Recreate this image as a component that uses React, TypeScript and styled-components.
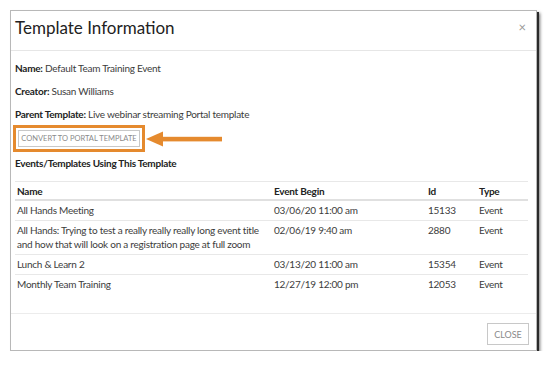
import React from "react";
import styled, { createGlobalStyle } from "styled-components";

const GlobalStyle = createGlobalStyle`
  html, body { margin: 0; padding: 0; background: #fff; }
  body { font-family: Lato, "Open Sans", sans-serif; color: #333; }
  * { box-sizing: border-box; }
`;

const Page = styled.div`
  padding: 10px 0 0 10px;
`;

const Modal = styled.div`
  width: 527px;
  height: 341px;
  background: #fff;
  border: 1px solid #b8b8b8;
  box-shadow: 2px 2px 0 #2a2a2a, 3px 3px 3px rgba(0, 0, 0, 0.55);
  display: flex;
  flex-direction: column;
  overflow: hidden;
`;

const Header = styled.div`
  flex-shrink: 0;
  height: 40px;
  padding: 0 10px 6px 4px;
  display: flex;
  align-items: center;
  justify-content: space-between;
  border-bottom: 1px solid #e6e6e6;
`;

const Title = styled.h1`
  margin: 0;
  font-size: 17px;
  font-weight: 400;
  color: #222;
`;

const CloseX = styled.span`
  font-size: 13px;
  color: #999;
  line-height: 1;
`;

const Body = styled.div`
  flex: 1;
  min-height: 0;
  padding: 10px 7px 0 4px;
  font-size: 10px;
  letter-spacing: -0.25px;
`;

const InfoLine = styled.div`
  line-height: 14px;
  margin-bottom: 9px;
  color: #3c3c3c;
  b { color: #222; font-weight: 700; }
`;

const ActionRow = styled.div`
  display: flex;
  align-items: center;
  margin-top: -5px;
  margin-left: -2px;
`;

const Highlight = styled.div`
  border: 3px solid #e58a2e;
  padding: 2px;
`;

const GhostButton = styled.button<{ $w: number; $h: number; $fs: number }>`
  width: ${(p) => p.$w}px;
  height: ${(p) => p.$h}px;
  padding: 0;
  background: #fff;
  border: 1px solid #c8c8c8;
  color: #8a8a8a;
  font-family: inherit;
  font-size: ${(p) => p.$fs}px;
  letter-spacing: 0;
  display: flex;
  align-items: center;
  justify-content: center;
  white-space: nowrap;
`;

const SectionTitle = styled.div`
  margin-top: 4px;
  line-height: 14px;
  font-weight: 700;
  color: #222;
`;

const Table = styled.table`
  margin-top: 11px;
  width: 513px;
  border-collapse: collapse;
  table-layout: fixed;
`;

const Th = styled.th<{ $w: number }>`
  width: ${(p) => p.$w}px;
  text-align: left;
  font-weight: 700;
  color: #222;
  padding: 2px 2px 1px;
  line-height: 14px;
  border-top: 1px solid #e8e8e8;
  border-bottom: 2px solid #e0e0e0;
`;

const Td = styled.td`
  vertical-align: top;
  padding: 2px 2px 3px;
  line-height: 14px;
  color: #3c3c3c;
  white-space: nowrap;
  border-top: 1px solid #e8e8e8;
`;

const Footer = styled.div`
  flex-shrink: 0;
  margin-top: auto;
  border-top: 1px solid #ececec;
  padding: 9px 7px 5px;
  display: flex;
  justify-content: flex-end;
`;

const Arrow = () => (
  <svg width="78" height="16" viewBox="0 0 78 16" style={{ marginLeft: 1 }}>
    <polygon points="0,8 17,0.5 17,15.5" fill="#e58a2e" />
    <rect x="16" y="5.8" width="60" height="4.6" fill="#e58a2e" />
  </svg>
);

const rows = [
  { name: "All Hands Meeting", begin: "03/06/20 11:00 am", id: "15133", type: "Event" },
  {
    name: (
      <>
        All Hands: Trying to test a really really really long event title
        <br />
        and how that will look on a registration page at full zoom
      </>
    ),
    begin: "02/06/19 9:40 am",
    id: "2880",
    type: "Event",
  },
  { name: "Lunch & Learn 2", begin: "03/13/20 11:00 am", id: "15354", type: "Event" },
  { name: "Monthly Team Training", begin: "12/27/19 12:00 pm", id: "12053", type: "Event" },
];

export default function App() {
  return (
    <>
      <GlobalStyle />
      <Page>
        <Modal>
          <Header>
            <Title>Template Information</Title>
            <CloseX>×</CloseX>
          </Header>
          <Body>
            <InfoLine>
              <b>Name:</b> Default Team Training Event
            </InfoLine>
            <InfoLine>
              <b>Creator:</b> Susan Williams
            </InfoLine>
            <InfoLine>
              <b>Parent Template:</b> Live webinar streaming Portal template
            </InfoLine>
            <ActionRow>
              <Highlight>
                <GhostButton $w={122} $h={17} $fs={7.5}>
                  CONVERT TO PORTAL TEMPLATE
                </GhostButton>
              </Highlight>
              <Arrow />
            </ActionRow>
            <SectionTitle>Events/Templates Using This Template</SectionTitle>
            <Table>
              <thead>
                <tr>
                  <Th $w={257}>Name</Th>
                  <Th $w={154}>Event Begin</Th>
                  <Th $w={51}>Id</Th>
                  <Th $w={51}>Type</Th>
                </tr>
              </thead>
              <tbody>
                {rows.map((r, i) => (
                  <tr key={i}>
                    <Td>{r.name}</Td>
                    <Td>{r.begin}</Td>
                    <Td>{r.id}</Td>
                    <Td>{r.type}</Td>
                  </tr>
                ))}
              </tbody>
            </Table>
          </Body>
          <Footer>
            <GhostButton $w={42} $h={22} $fs={9}>
              CLOSE
            </GhostButton>
          </Footer>
        </Modal>
      </Page>
    </>
  );
}
